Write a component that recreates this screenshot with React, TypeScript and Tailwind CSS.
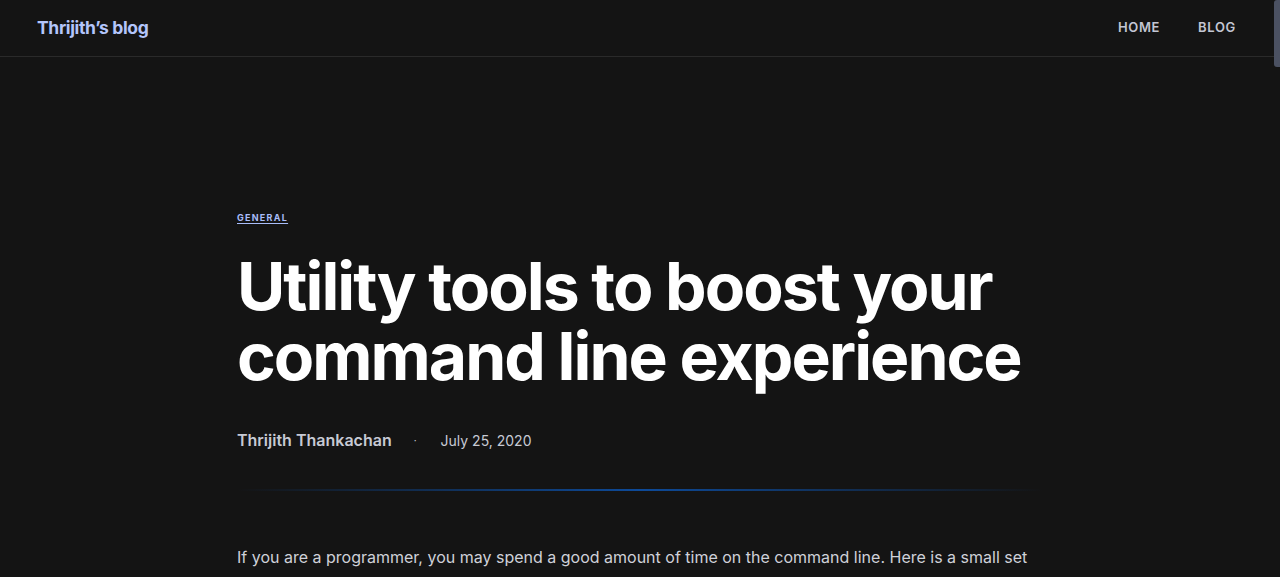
export default function App() {
  return (
    <div className="relative h-[577px] overflow-hidden bg-[#141414] font-['Inter','Liberation_Sans',sans-serif]">
      <header className="flex h-[57px] items-center justify-between border-b border-[#2a2a2a] pl-[37px] pr-[44px]">
        <a className="text-[17.5px] font-bold tracking-[-0.02em] text-[#b3c5fb]">Thrijith’s blog</a>
        <nav className="flex gap-[38px] text-[13px] font-semibold tracking-[0.05em] text-[#c3c6d3]">
          <a>HOME</a>
          <a>BLOG</a>
        </nav>
      </header>

      <article className="mx-auto w-[806px] pt-[146px]">
        <a className="text-[9px] font-bold uppercase tracking-[0.14em] text-[#a9bdf9] underline underline-offset-2">
          General
        </a>
        <h1 className="mt-[24px] text-[66px] font-bold leading-[70px] tracking-[-0.03em] text-white">
          Utility tools to boost your command line experience
        </h1>
        <div className="mt-[37px] flex items-center text-[#c7cad4]">
          <span className="text-[16px] font-semibold">Thrijith Thankachan</span>
          <span className="ml-[22px] text-[10px]">·</span>
          <span className="ml-[24px] text-[14px]">July 25, 2020</span>
        </div>
        <div className="mt-[37px] h-[2px] bg-[linear-gradient(90deg,transparent_0%,#0d4a99_50%,transparent_100%)]" />
        <p className="mt-[51px] text-[16px] leading-[30px] text-[#cfd1d9]">
          If you are a programmer, you may spend a good amount of time on the command line. Here is a small set
          of utility tools that can make your life easier.
        </p>
      </article>

      <div className="absolute right-0 top-0 h-[67px] w-[6px] rounded-l-[3px] bg-[#4b5162]" />
    </div>
  );
}
